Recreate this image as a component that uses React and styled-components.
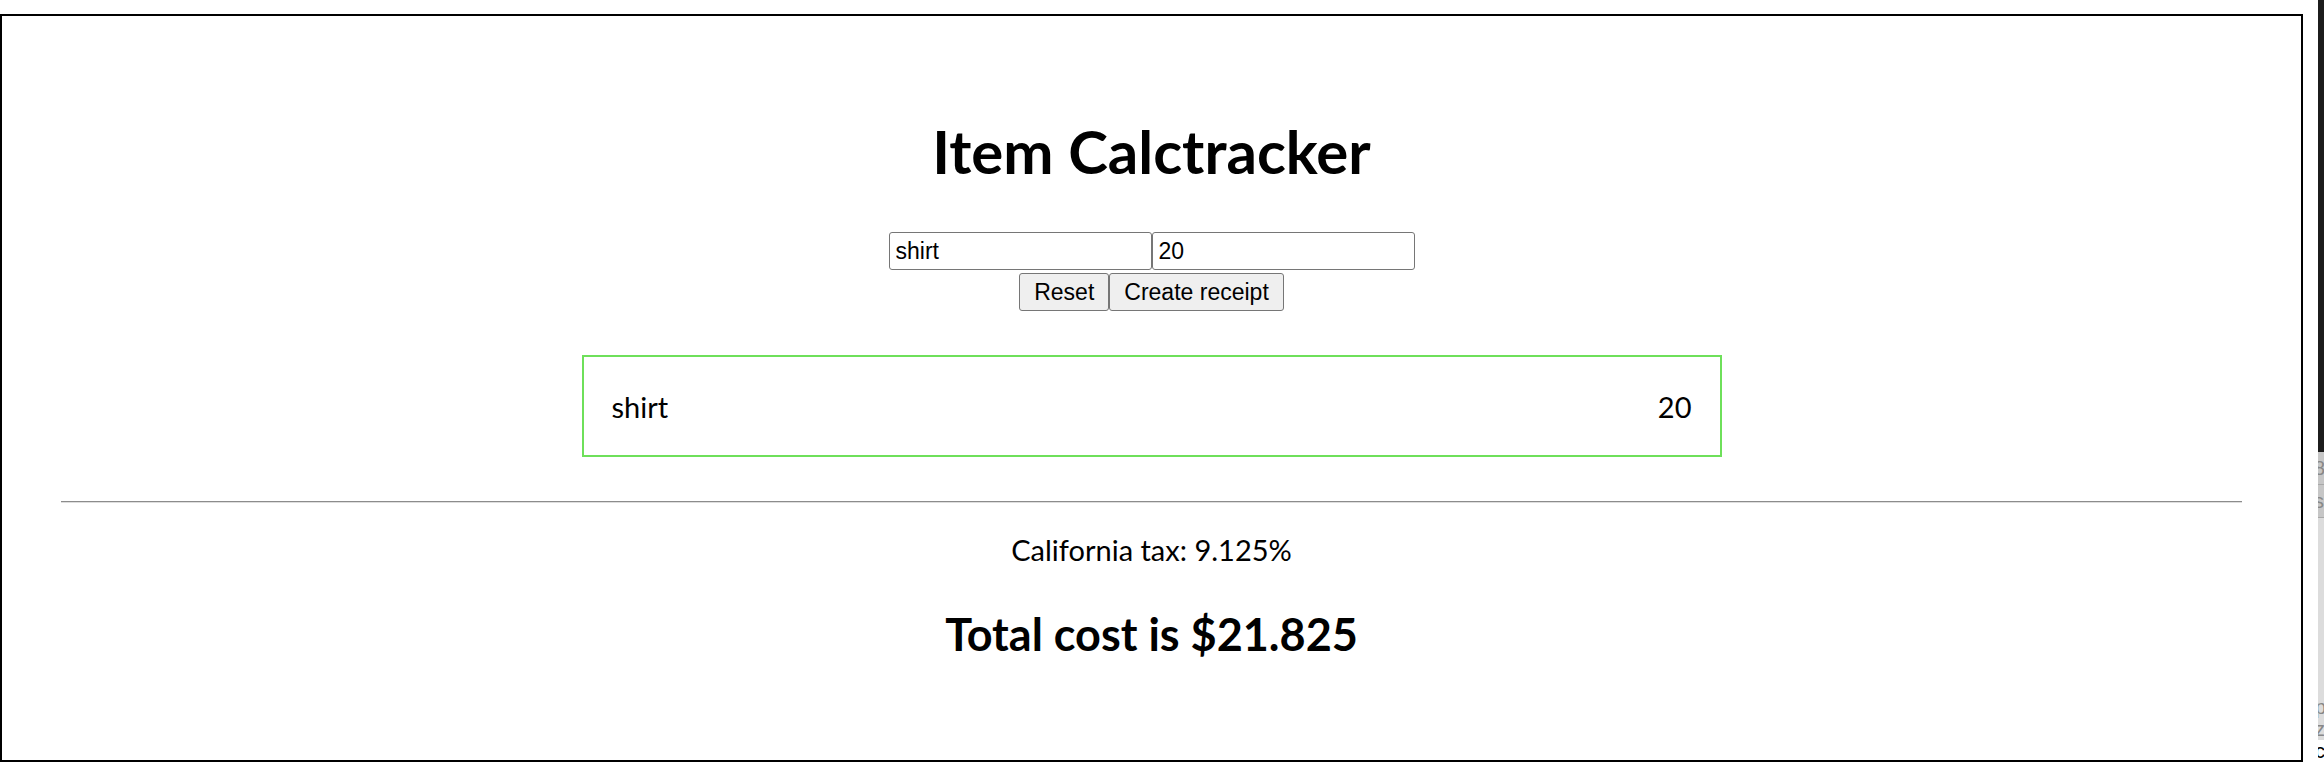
import React from 'react';
import styled, { createGlobalStyle } from 'styled-components';

const GlobalStyle = createGlobalStyle`
  html, body {
    margin: 0;
    padding: 0;
    background: #ffffff;
  }
`;

const App = () => {
  const items = [{ name: 'shirt', price: 20 }];
  const tax = 9.125;

  return (
    <Screen>
      <GlobalStyle />
      <Frame>
        <Header>
          <Title>Item Calctracker</Title>
          <InputRow>
            <TextInput defaultValue="shirt" />
            <TextInput defaultValue="20" />
          </InputRow>
          <ButtonRow>
            <Button>Reset</Button>
            <Button>Create receipt</Button>
          </ButtonRow>
        </Header>
        {items.map((item) => (
          <ItemCard key={item.name}>
            <span>{item.name}</span>
            <span>{item.price}</span>
          </ItemCard>
        ))}
        <Divider />
        <TaxLine>California tax: {tax}%</TaxLine>
        <Total>Total cost is $21.825</Total>
      </Frame>
      <SideStrip>
        <StripDark />
        <StripTab>8</StripTab>
        <StripTab>sl</StripTab>
        <StripRest>
          <span>p</span>
          <span>z</span>
          <span>c</span>
        </StripRest>
      </SideStrip>
    </Screen>
  );
};

const Screen = styled.div`
  display: flex;
  align-items: flex-start;
  gap: 15px;
  width: 2324px;
  height: 762px;
  overflow: hidden;
`;

const Frame = styled.div`
  box-sizing: border-box;
  width: 2303px;
  height: 748px;
  margin-top: 14px;
  border: 2px solid #000;
  display: flex;
  flex-direction: column;
  align-items: center;
  font-family: Lato, 'Noto Sans', sans-serif;
  color: #000;
`;

const Header = styled.div`
  display: flex;
  flex-direction: column;
  align-items: center;
  padding-top: 105px;
`;

const Title = styled.h1`
  margin: 0;
  font-size: 60px;
  line-height: 1;
  font-weight: 700;
`;

const InputRow = styled.div`
  display: flex;
  margin-top: 51px;
`;

const TextInput = styled.input`
  box-sizing: border-box;
  width: 263px;
  height: 38px;
  padding: 0 6px;
  border: 1px solid #767676;
  border-radius: 3px;
  font-family: 'Liberation Sans', Arial, sans-serif;
  font-size: 23px;
  color: #000;
`;

const ButtonRow = styled.div`
  display: flex;
  margin-top: 3px;
`;

const Button = styled.button`
  box-sizing: border-box;
  height: 38px;
  padding: 0 14px;
  background: #efefef;
  border: 1px solid #767676;
  border-radius: 3px;
  font-family: 'Liberation Sans', Arial, sans-serif;
  font-size: 23px;
  color: #000;
`;

const ItemCard = styled.div`
  box-sizing: border-box;
  width: 1140px;
  height: 102px;
  margin-top: 44px;
  padding: 0 28px;
  border: 2px solid #6ee05a;
  display: flex;
  justify-content: space-between;
  align-items: center;
  font-size: 29px;
`;

const Divider = styled.hr`
  align-self: stretch;
  margin: 44px 59px 0;
  border: none;
  border-top: 1px solid #8c8c8c;
  border-bottom: 1px solid #dedede;
`;

const TaxLine = styled.p`
  margin: 32px 0 0;
  font-size: 29px;
  line-height: 1;
  font-weight: 400;
`;

const Total = styled.h2`
  margin: 48px 0 0;
  font-size: 45px;
  line-height: 1;
  font-weight: 700;
`;

const SideStrip = styled.div`
  width: 6px;
  height: 762px;
  display: flex;
  flex-direction: column;
  overflow: hidden;
  font-family: 'Liberation Sans', Arial, sans-serif;
  font-size: 20px;
  color: #888;
`;

const StripDark = styled.div`
  height: 452px;
  background: #1c1c1c;
`;

const StripTab = styled.div`
  height: 32px;
  background: #c6c6c6;
  border-bottom: 1px solid #a8a8a8;
  line-height: 32px;
  text-indent: -4px;
`;

const StripRest = styled.div`
  flex: 1;
  background: #dcdcdc;
  display: flex;
  flex-direction: column;
  justify-content: flex-end;
  text-indent: -3px;
  line-height: 22px;

  span:last-child {
    color: #000;
    background: #fff;
  }
`;

export default App;
